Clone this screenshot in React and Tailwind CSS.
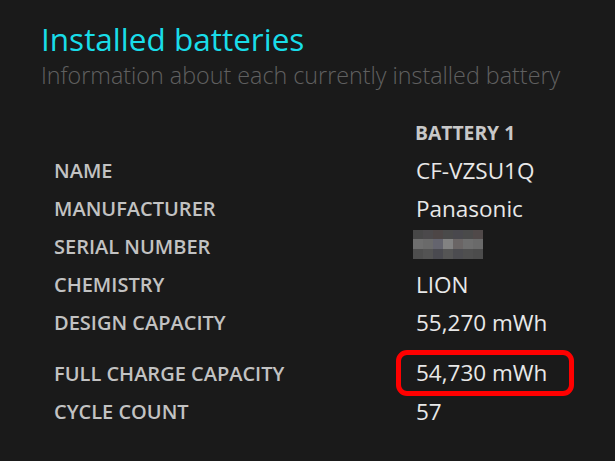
import React from "react";

const rows1 = [
  ["NAME", "CF-VZSU1Q"],
  ["MANUFACTURER", "Panasonic"],
  ["SERIAL NUMBER", null],
  ["CHEMISTRY", "LION"],
  ["DESIGN CAPACITY", "55,270 mWh"],
];

const pix = [
  ["#474747", "#4b494b", "#4d4646", "#4a4a4a", "#49484d", "#4a4a4a", "#504949"],
  ["#6e6e6e", "#6a6a6a", "#64646e", "#828282", "#6a6565", "#6e6e6e", "#6a6a6a"],
  ["#4e4e4e", "#535353", "#4a4a50", "#555555", "#4c4c50", "#4f4f4f", "#4c4c4c"],
];

function Serial() {
  return (
    <div className="flex flex-col w-[70px] h-[29px] -ml-[3px] mb-[6px]">
      {pix.map((r, i) => (
        <div key={i} className="flex flex-1">
          {r.map((c, j) => (
            <div key={j} className="flex-1" style={{ backgroundColor: c }} />
          ))}
        </div>
      ))}
    </div>
  );
}

function Row({ label, value, children }) {
  return (
    <div className="flex items-center h-[38px]">
      <div className="w-[362px] text-[20px] font-semibold text-[#c2c2c2]">{label}</div>
      <div className="text-[22.5px] text-[#e8e8e8]">{children ?? value}</div>
    </div>
  );
}

export default function App() {
  return (
    <div
      className="w-[615px] h-[461px] bg-[#1a1a1a] overflow-hidden pl-[41px] pt-[18px]"
      style={{ fontFamily: '"Segoe UI", "Open Sans", "Noto Sans", sans-serif' }}
    >
      <div className="text-[31.5px] leading-[42px] text-[#19dde9]">Installed batteries</div>
      <div className="text-[23.3px] leading-[30px] font-light text-[#606060]">
        Information about each currently installed battery
      </div>
      <div className="ml-[13px] mt-[24px]">
        <div className="flex items-center h-[38px]">
          <div className="w-[361px]" />
          <div className="text-[19.3px] font-bold text-[#c8c8c8]">BATTERY 1</div>
        </div>
        {rows1.map(([l, v]) => (
          <Row key={l} label={l} value={v}>
            {v === null ? <Serial /> : null}
          </Row>
        ))}
        <div className="h-[13px]" />
        <div className="flex items-center h-[38px]">
          <div className="w-[342px] text-[20px] font-semibold text-[#c2c2c2]">FULL CHARGE CAPACITY</div>
          <div className="border-[5px] border-[#ff0000] rounded-[11px] h-[46px] w-[178px] mb-[2px] flex items-center pl-[15px] text-[22.5px] text-[#e8e8e8]">
            54,730 mWh
          </div>
        </div>
        <Row label="CYCLE COUNT" value="57" />
      </div>
    </div>
  );
}
